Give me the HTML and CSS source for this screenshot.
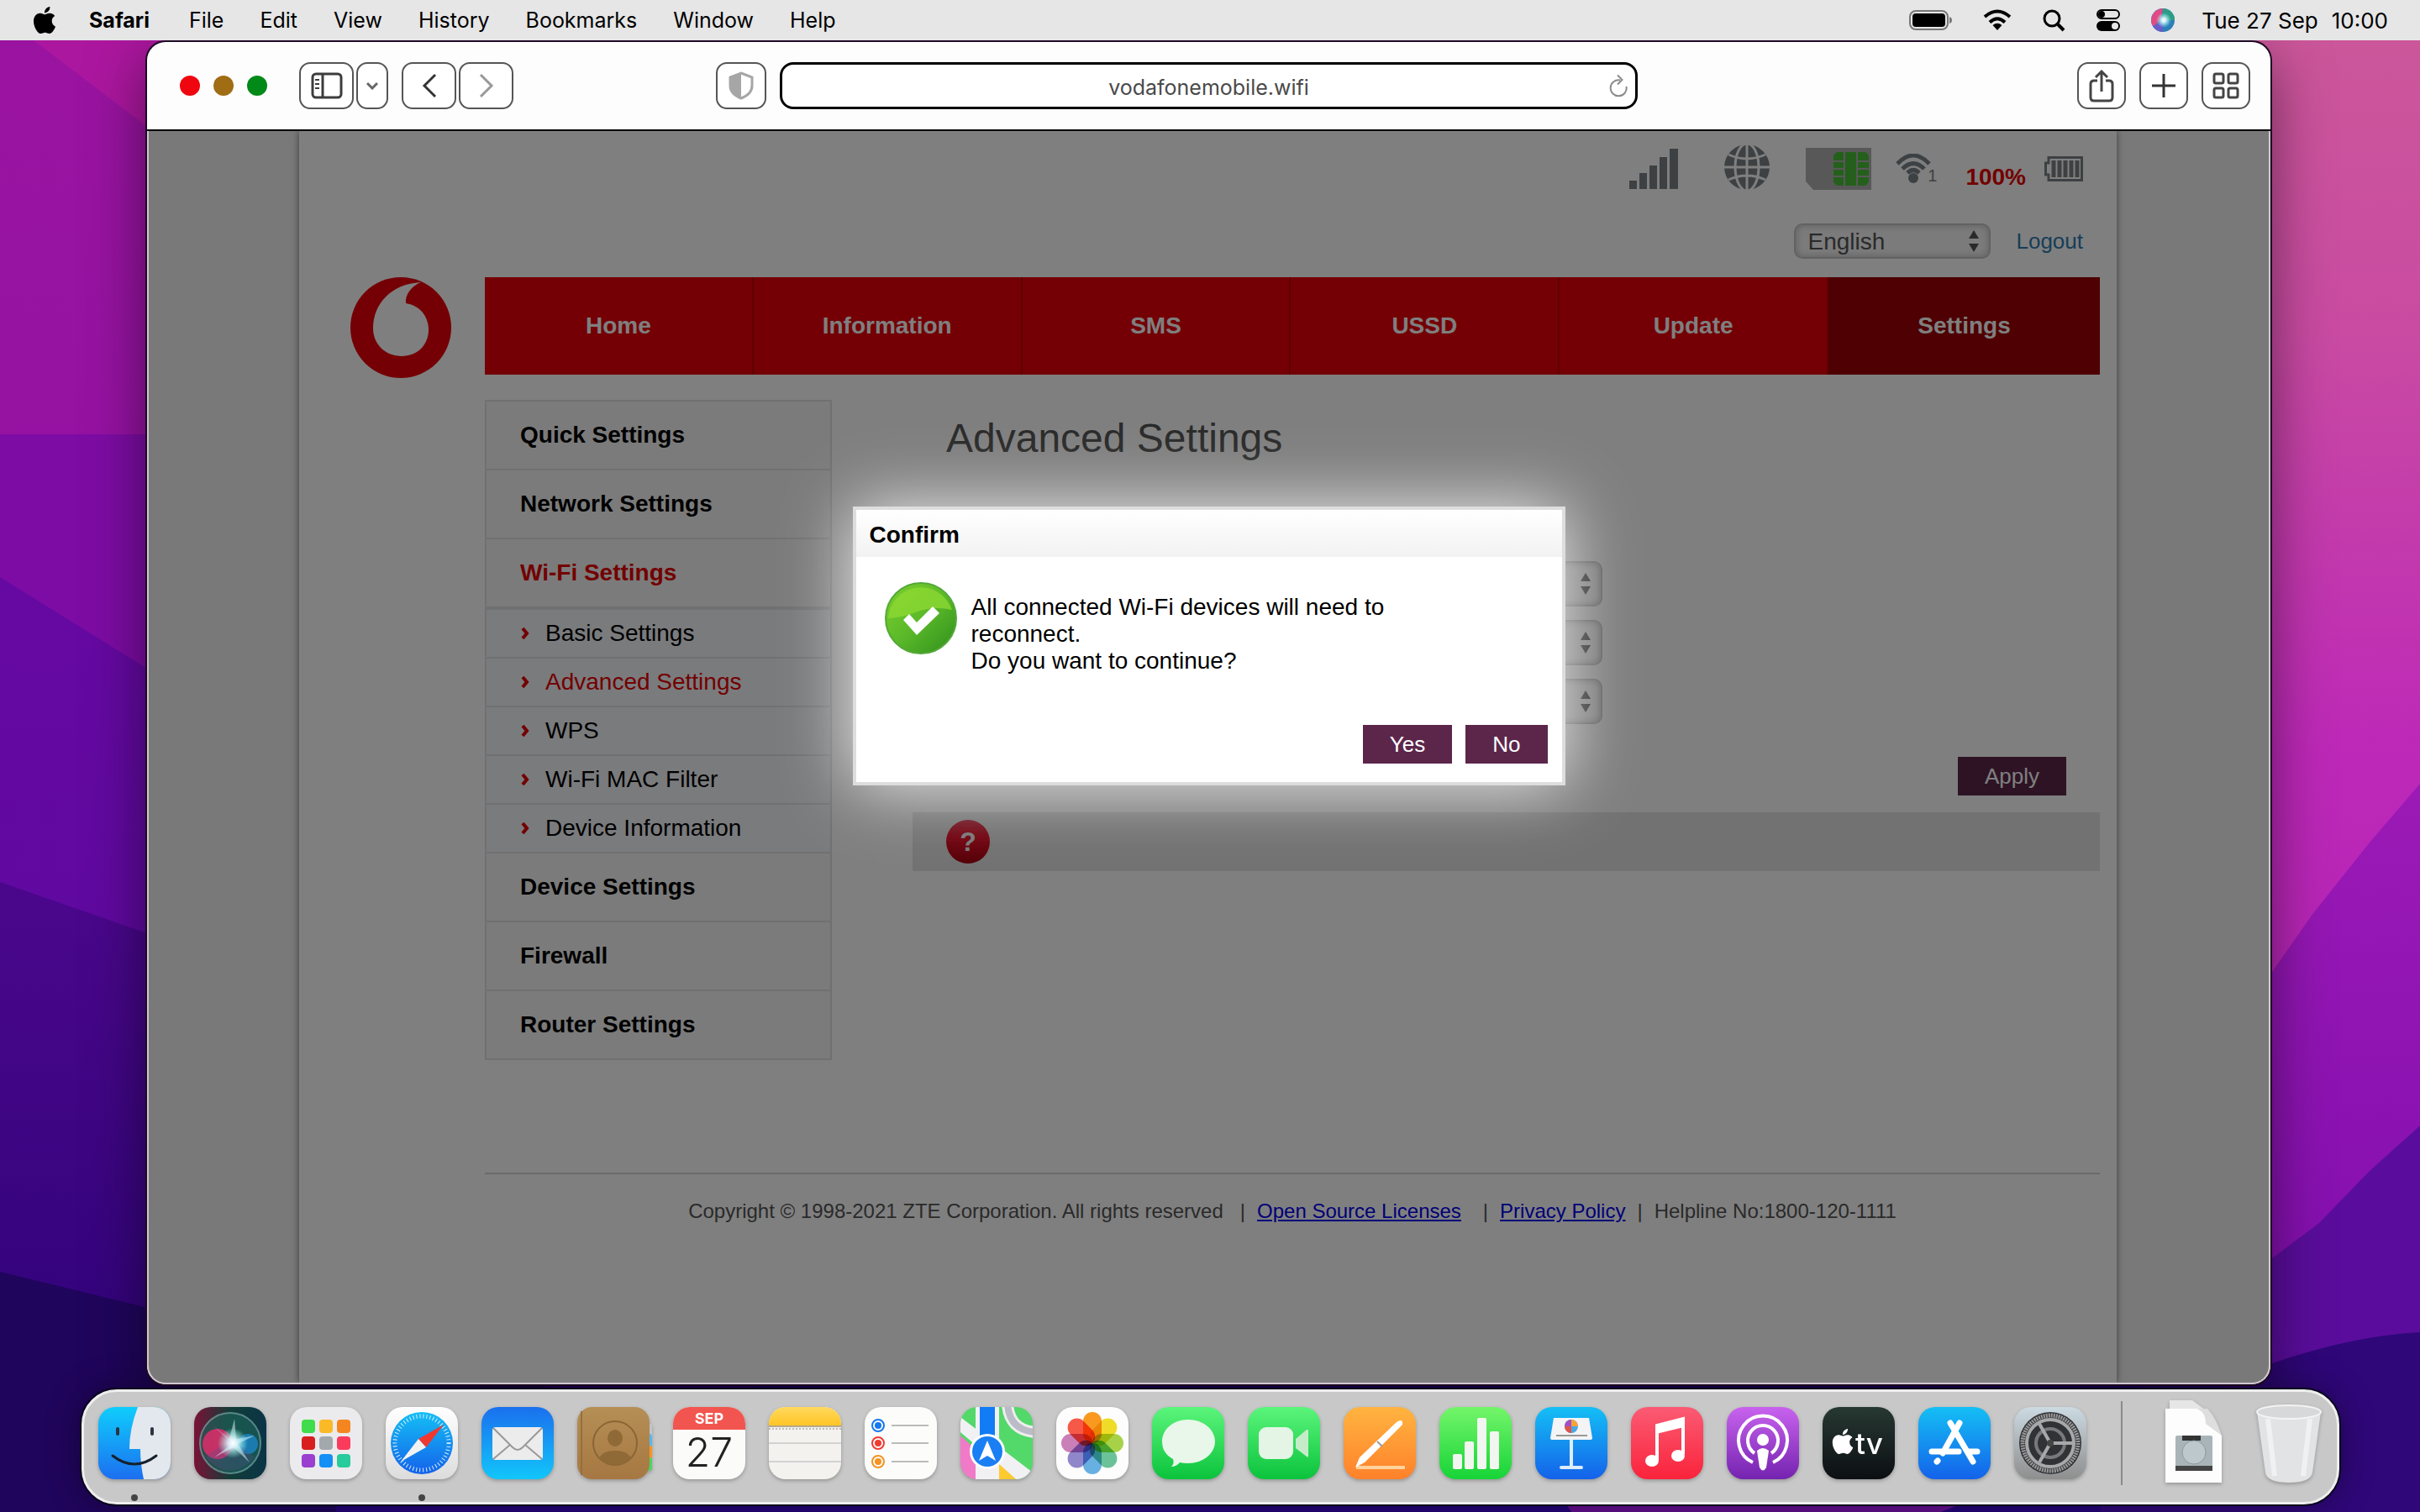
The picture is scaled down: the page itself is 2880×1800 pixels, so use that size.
FILE: index.html
```html
<!DOCTYPE html>
<html lang="en">
<head>
    <meta charset="UTF-8">
    <meta name="viewport" content="width=device-width, initial-scale=1.0">
    <title>Advanced Settings</title>
    <link rel="stylesheet" href="styles.css">
</head>
<body>
    <!-- Wallpaper -->
    <svg class="wallpaper" viewBox="0 0 2880 1800" preserveAspectRatio="none" aria-hidden="true">
        <defs>
            <linearGradient id="wpA" x1="0" y1="0" x2="0" y2="1"><stop offset="0" stop-color="#9a14a0"/><stop offset="1" stop-color="#8a0da6"/></linearGradient>
            <linearGradient id="wpB" x1="0" y1="0" x2="0" y2="1"><stop offset="0" stop-color="#cc5899"/><stop offset=".22" stop-color="#c94ba2"/><stop offset=".5" stop-color="#bd28b8"/><stop offset="1" stop-color="#a81fb0"/></linearGradient>
            <linearGradient id="wpC" x1="0" y1="0" x2="0" y2="1"><stop offset="0" stop-color="#6609a2"/><stop offset="1" stop-color="#55089c"/></linearGradient>
            <linearGradient id="wpD" x1="0" y1="0" x2="0" y2="1"><stop offset="0" stop-color="#4b078c"/><stop offset="1" stop-color="#290275"/></linearGradient>
            <linearGradient id="wpE" x1="0" y1="0" x2="0" y2="1"><stop offset="0" stop-color="#9c1ab6"/><stop offset="1" stop-color="#780aac"/></linearGradient>
        </defs>
        <rect width="2880" height="1800" fill="url(#wpB)"/>
        <path d="M0 0H1400V1800H0z" fill="#ac179f"/>
        <path d="M0 0 40 48 174 150 900 900V1800H0z" fill="url(#wpA)"/>
        <path d="M0 517H600V1800H0z" fill="#7d0ca4"/>
        <path d="M0 687 172 794 900 1200V1800H0z" fill="url(#wpC)"/>
        <path d="M0 1050 172 1110 900 1300V1800H0z" fill="url(#wpD)"/>
        <path d="M0 1514 172 1556 1400 1800H0z" fill="#20055c"/>
        <path d="M2200 1800 2704 1157 2753 1087 2820 1003 2880 933V1800z" fill="url(#wpE)"/>
        <path d="M1400 1740 2704 1498 2760 1456 2820 1394 2880 1340V1800H1400z" fill="#5a0d9c"/>
        <path d="M400 1790 900 1650H3000V1800H400z" fill="#25047a"/>
        <path d="M1862 1788H2340L2310 1800H1870z" fill="#640f90"/>
        <path d="M2500 1660 2704 1623Q2800 1590 2880 1586V1800H2500z" fill="#2f0779"/>
    </svg>

    <!-- Shared shapes -->
    <svg class="sprite" aria-hidden="true">
        <defs>
            <symbol id="apple" viewBox="0 0 24 24"><path fill="currentColor" d="M12.152 6.896c-.948 0-2.415-1.078-3.96-1.04-2.04.027-3.91 1.183-4.961 3.014-2.117 3.675-.546 9.103 1.519 12.09 1.013 1.454 2.208 3.09 3.792 3.039 1.52-.065 2.09-.987 3.935-.987 1.831 0 2.35.987 3.96.948 1.637-.026 2.676-1.48 3.676-2.948 1.156-1.688 1.636-3.325 1.662-3.415-.039-.013-3.182-1.221-3.22-4.857-.026-3.04 2.48-4.494 2.597-4.559-1.429-2.09-3.623-2.324-4.39-2.376-2-.156-3.675 1.09-4.61 1.09zM15.53 3.83c.843-1.012 1.4-2.427 1.245-3.83-1.207.052-2.662.805-3.532 1.818-.78.896-1.454 2.338-1.273 3.714 1.338.104 2.715-.688 3.559-1.701"/></symbol>
            <symbol id="updown" viewBox="0 0 14 28"><path fill="currentColor" d="M7 1 13 11H1zM7 27 1 17H13z"/></symbol>
            <symbol id="arrow" viewBox="0 0 12 18"><path d="M3 3 8 9 3 15" fill="none" stroke="#e60000" stroke-width="4"/></symbol>
            <clipPath id="tile"><rect width="86" height="86" rx="20"/></clipPath>
            <linearGradient id="gFinder" x1="0" y1="0" x2="0" y2="1"><stop offset="0" stop-color="#0fcdfc"/><stop offset="1" stop-color="#1c6ff0"/></linearGradient>
            <linearGradient id="gBlue" x1="0" y1="0" x2="0" y2="1"><stop offset="0" stop-color="#1a70ee"/><stop offset="1" stop-color="#12c6fa"/></linearGradient>
            <linearGradient id="gSky" x1="0" y1="0" x2="0" y2="1"><stop offset="0" stop-color="#14bff5"/><stop offset="1" stop-color="#1462ea"/></linearGradient>
            <linearGradient id="gGreen" x1="0" y1="0" x2="0" y2="1"><stop offset="0" stop-color="#5bf57b"/><stop offset="1" stop-color="#0bc33c"/></linearGradient>
            <linearGradient id="gLime" x1="0" y1="0" x2="0" y2="1"><stop offset="0" stop-color="#74f56a"/><stop offset="1" stop-color="#16d437"/></linearGradient>
            <linearGradient id="gOrange" x1="0" y1="0" x2="0" y2="1"><stop offset="0" stop-color="#ffb440"/><stop offset="1" stop-color="#ff812b"/></linearGradient>
            <linearGradient id="gRed" x1="0" y1="0" x2="0" y2="1"><stop offset="0" stop-color="#fb5b74"/><stop offset="1" stop-color="#fa233b"/></linearGradient>
            <linearGradient id="gPurple" x1="0" y1="0" x2="0" y2="1"><stop offset="0" stop-color="#c863ee"/><stop offset="1" stop-color="#7423b0"/></linearGradient>
            <linearGradient id="gPaper" x1="0" y1="0" x2="0" y2="1"><stop offset="0" stop-color="#fff"/><stop offset="1" stop-color="#dcdcdc"/></linearGradient>
            <linearGradient id="gDark" x1="0" y1="0" x2="0" y2="1"><stop offset="0" stop-color="#273832"/><stop offset="1" stop-color="#0c0f12"/></linearGradient>
            <linearGradient id="gBrown" x1="0" y1="0" x2="0" y2="1"><stop offset="0" stop-color="#b58f55"/><stop offset="1" stop-color="#a67742"/></linearGradient>
            <linearGradient id="gGold" x1="0" y1="0" x2="0" y2="1"><stop offset="0" stop-color="#ffd95e"/><stop offset="1" stop-color="#ffc525"/></linearGradient>
            <linearGradient id="gSteel" x1="0" y1="0" x2="0" y2="1"><stop offset="0" stop-color="#ccdae2"/><stop offset="1" stop-color="#8e8e8e"/></linearGradient>
            <linearGradient id="gOk" x1="0" y1="0" x2="1" y2="1"><stop offset="0" stop-color="#7cd02c"/><stop offset=".5" stop-color="#5bb929"/><stop offset="1" stop-color="#2e8f1c"/></linearGradient>
            <linearGradient id="gSiri" x1="0" y1="0" x2="1" y2="0"><stop offset="0" stop-color="#7a1236"/><stop offset=".5" stop-color="#123c38"/><stop offset="1" stop-color="#0a3446"/></linearGradient>
            <radialGradient id="gGlow"><stop offset="0" stop-color="#fff"/><stop offset=".3" stop-color="#dff8ff" stop-opacity=".9"/><stop offset="1" stop-color="#8fe" stop-opacity="0"/></radialGradient>
        </defs>
    </svg>

    <header class="menubar">
        <nav class="menus">
            <svg class="apple-icon" aria-hidden="true"><use href="#apple"/></svg>
            <a href="#" class="app-name">Safari</a>
            <a href="#">File</a>
            <a href="#">Edit</a>
            <a href="#">View</a>
            <a href="#">History</a>
            <a href="#">Bookmarks</a>
            <a href="#">Window</a>
            <a href="#">Help</a>
        </nav>
        <div class="menu-extras">
            <svg width="52" height="24" viewBox="0 0 52 24"><rect x="1" y="1" width="45" height="22" rx="7" fill="none" stroke="#777" stroke-width="2"/><rect x="4" y="4" width="39" height="16" rx="4"/><path d="M48 8q3 1 3 4t-3 4z" fill="#777"/></svg>
            <svg width="34" height="26" viewBox="0 0 34 26" fill="none" stroke="#000" stroke-width="4"><path d="M2 9Q17-4 32 9M8 15.500Q17 7 26 15.500"/><path d="M17 25 11.500 19Q17 14.500 22.500 19z" fill="#000" stroke="none"/></svg>
            <svg width="28" height="28" viewBox="0 0 28 28" fill="none" stroke="#000" stroke-width="3"><circle cx="12" cy="12" r="9"/><path d="M18.500 18.500 26 26" stroke-width="4"/></svg>
            <svg width="30" height="28" viewBox="0 0 30 28"><rect x="2" y="2" width="26" height="10" rx="5" fill="none" stroke="#000" stroke-width="2"/><circle cx="7" cy="7" r="4"/><rect x="1" y="15" width="28" height="12" rx="6"/><circle cx="23" cy="21" r="4" fill="#e6e6e6"/></svg>
            <svg width="28" height="28" viewBox="0 0 28 28"><circle cx="14" cy="14" r="14" fill="#2c7fb8"/><path d="M14 0A14 14 0 0 0 2 21Q12 18 14 0z" fill="#e04b86"/><path d="M14 0A14 14 0 0 1 28 14H14z" fill="#2d9c86"/><path d="M2 21A14 14 0 0 0 14 28V16z" fill="#6a5bc8"/><circle cx="15" cy="14" r="9" fill="url(#gGlow)"/></svg>
            <time class="clock"><span>Tue 27 Sep</span><span>10:00</span></time>
        </div>
    </header>

    <main class="window">
        <div class="toolbar">
            <div class="tools tools-left">
                <div class="lights"><i class="close"></i><i class="min"></i><i class="max"></i></div>
                <button type="button" class="tool tool-wide" aria-label="Sidebar">
                    <svg width="38" height="32" viewBox="0 0 38 32" fill="none" stroke="#3c3c3c" stroke-width="3"><rect x="2" y="2" width="34" height="28" rx="4"/><path d="M14 2V30"/><path d="M5 9H10M5 14H10M5 19H10" stroke-width="2"/></svg>
                </button>
                <button type="button" class="tool tool-narrow" aria-label="Tab groups">
                    <svg width="14" height="10" viewBox="0 0 14 10" fill="none" stroke="#666" stroke-width="3"><path d="M1 2 7 8 13 2"/></svg>
                </button>
                <button type="button" class="tool tool-wide tool-back" aria-label="Back">
                    <svg width="18" height="30" viewBox="0 0 18 30" fill="none" stroke="#333" stroke-width="3"><path d="M16 2 3 15 16 28"/></svg>
                </button>
                <button type="button" class="tool tool-wide" aria-label="Forward">
                    <svg width="18" height="30" viewBox="0 0 18 30" fill="none" stroke="#999" stroke-width="3"><path d="M2 2 15 15 2 28"/></svg>
                </button>
                <button type="button" class="tool tool-shield" aria-label="Privacy report">
                    <svg width="30" height="34" viewBox="0 0 30 34"><path d="M15 2 28 7V17Q28 27 15 32 2 27 2 17V7z" fill="none" stroke="#a6a6a6" stroke-width="3"/><path d="M15 2V32Q2 27 2 17V7z" fill="#a6a6a6"/></svg>
                </button>
            </div>
            <div class="address">
                <input type="text" aria-label="Address" value="vodafonemobile.wifi">
                <button type="button" aria-label="Reload">
                    <svg width="22" height="28" viewBox="0 0 22 28" fill="none" stroke="#8a8a8a" stroke-width="2"><path d="M13 7.500A9.500 9.500 0 1 0 20.500 15"/><path d="M10 1.500 15.500 7 10 12.500"/></svg>
                </button>
            </div>
            <div class="tools tools-right">
                <button type="button" class="tool" aria-label="Share">
                    <svg width="30" height="40" viewBox="0 0 30 40" fill="none" stroke="#444" stroke-width="3"><path d="M10 14H6Q2 14 2 18V34Q2 38 6 38H24Q28 38 28 34V18Q28 14 24 14H20M15 27V4M8 10 15 3 22 10"/></svg>
                </button>
                <button type="button" class="tool" aria-label="New tab">
                    <svg width="28" height="28" viewBox="0 0 28 28" stroke="#333" stroke-width="3"><path d="M14 0V28M0 14H28"/></svg>
                </button>
                <button type="button" class="tool" aria-label="Tab overview">
                    <svg width="32" height="32" viewBox="0 0 32 32" fill="none" stroke="#444" stroke-width="3"><rect x="2" y="2" width="11" height="11" rx="2"/><rect x="19" y="2" width="11" height="11" rx="2"/><rect x="2" y="19" width="11" height="11" rx="2"/><rect x="19" y="19" width="11" height="11" rx="2"/></svg>
                </button>
            </div>
        </div>

        <div class="viewport">
            <div class="page">
                <div class="status">
                    <svg width="58" height="48" viewBox="0 0 58 48" fill="#7c8286"><rect y="38" width="9" height="10"/><rect x="12" y="29" width="9" height="19"/><rect x="24" y="20" width="9" height="28"/><rect x="36" y="10" width="9" height="38"/><rect x="48" width="10" height="48"/></svg>
                    <svg class="globe" width="54" height="54" viewBox="0 0 54 54"><circle cx="27" cy="27" r="27" fill="#7c8286"/><g fill="none" stroke="#fff" stroke-width="3"><path d="M27 0V54M0 27H54M5 12Q27 22 49 12M5 42Q27 32 49 42"/><ellipse cx="27" cy="27" rx="14" ry="28"/></g></svg>
                    <svg class="sim" width="78" height="50" viewBox="0 0 78 50"><path d="M0 0H78V50H9L0 40z" fill="#b0b0b0"/><rect x="33" y="5" width="42" height="40" rx="6" fill="#48c038"/><path d="M46 5V45M61 5V45M33 16H46M33 25H46M33 34H46M61 16H75M61 25H75M61 34H75" stroke="#b0b0b0" stroke-width="2"/></svg>
                    <div class="wifi">
                        <svg width="42" height="36" viewBox="0 0 42 36"><g fill="none" stroke="#7c8286" stroke-width="5"><path d="M2 12Q21-8 40 12M8 18Q21 5 34 18M14 23Q21 16 28 23"/></g><circle cx="21" cy="29" r="6" fill="#7c8286"/></svg>
                        <span>1</span>
                    </div>
                    <strong>100%</strong>
                    <svg width="46" height="30" viewBox="0 0 46 30"><path d="M5 1.500H44.500V28.500H5V22H1.500V8H5z" fill="none" stroke="#7c8286" stroke-width="3"/><path d="M11 5V25M18 5V25M25 5V25M32 5V25M39 5V25" stroke="#7c8286" stroke-width="5"/></svg>
                </div>
                <div class="account">
                    <span class="select language">
                        <select aria-label="Language"><option>English</option></select>
                        <svg><use href="#updown"/></svg>
                    </span>
                    <a href="#">Logout</a>
                </div>

                <div class="banner">
                    <svg class="logo" width="120" height="120" viewBox="0 0 120 120"><circle cx="60" cy="60" r="60" fill="#e8000a"/><path d="M84 6C48 8 27 32 27 61 27 80 42 94 61 94 80 94 93 80 93 63 93 46 83 34 66 31 65 21 72 11 84 6z" fill="#fff"/></svg>
                    <nav class="tabs">
                        <a href="#">Home</a>
                        <a href="#">Information</a>
                        <a href="#">SMS</a>
                        <a href="#">USSD</a>
                        <a href="#">Update</a>
                        <a href="#" class="active">Settings</a>
                    </nav>
                </div>

                <div class="columns">
                    <nav class="sidebar">
                        <a href="#">Quick Settings</a>
                        <a href="#">Network Settings</a>
                        <a href="#" class="current">Wi-Fi Settings</a>
                        <div class="submenu">
                            <a href="#"><svg><use href="#arrow"/></svg>Basic Settings</a>
                            <a href="#" class="current"><svg><use href="#arrow"/></svg>Advanced Settings</a>
                            <a href="#"><svg><use href="#arrow"/></svg>WPS</a>
                            <a href="#"><svg><use href="#arrow"/></svg>Wi-Fi MAC Filter</a>
                            <a href="#"><svg><use href="#arrow"/></svg>Device Information</a>
                        </div>
                        <a href="#">Device Settings</a>
                        <a href="#">Firewall</a>
                        <a href="#">Router Settings</a>
                    </nav>
                    <section class="content">
                        <h1>Advanced Settings</h1>
                        <form>
                            <span class="select"><select aria-label="Network mode"><option></option></select><svg><use href="#updown"/></svg></span>
                            <span class="select"><select aria-label="Country"><option></option></select><svg><use href="#updown"/></svg></span>
                            <span class="select"><select aria-label="Channel"><option></option></select><svg><use href="#updown"/></svg></span>
                            <button type="button" class="btn apply">Apply</button>
                        </form>
                        <div class="help"><button type="button">?</button></div>
                    </section>
                </div>

                <footer>
                    <span class="copyright">Copyright © 1998-2021 ZTE Corporation. All rights reserved</span>
                    <span>|</span>
                    <a href="#">Open Source Licenses</a>
                    <span class="bar">|</span>
                    <a href="#">Privacy Policy</a>
                    <span>|</span>
                    <span>Helpline No:1800-120-1111</span>
                </footer>
            </div>

            <!-- Confirm dialog -->
            <div class="overlay"></div>
            <div class="dialog" role="dialog" aria-labelledby="dialogTitle">
                <h2 id="dialogTitle">Confirm</h2>
                <div class="dialog-body">
                    <svg width="86" height="86" viewBox="0 0 86 86"><circle cx="43" cy="43" r="42" fill="url(#gOk)" stroke="#55a83a" stroke-width="2"/><path d="M4 43A39 39 0 0 1 80 33Q58 28 36 36 22 42 4 43z" fill="#8cd832" opacity=".8"/><path d="M22 45 29 38 38 48 57 29 65 37 38 63z" fill="#fff"/></svg>
                    <p>All connected Wi-Fi devices will need to reconnect.<br>Do you want to continue?</p>
                </div>
                <div class="dialog-buttons">
                    <button type="button" class="btn">Yes</button>
                    <button type="button" class="btn">No</button>
                </div>
            </div>
        </div>
    </main>

    <ul class="dock">
        <li class="running"><svg viewBox="0 0 86 86"><g clip-path="url(#tile)"><rect width="86" height="86" fill="url(#gFinder)"/><path d="M47 0Q37 26 37 50H50Q50 68 54 86H86V0z" fill="#e3e8ef"/></g><path d="M23 26V32M64 26V32" stroke="#2b3440" stroke-width="4" stroke-linecap="round"/><path d="M17 58Q43 78 69 58" fill="none" stroke="#16202c" stroke-width="3" stroke-linecap="round"/></svg></li>
        <li><svg viewBox="0 0 86 86"><rect width="86" height="86" rx="20" fill="url(#gSiri)"/><circle cx="43" cy="43" r="36" fill="#1c5f57" opacity=".7" stroke="#7aa" stroke-width="2"/><circle cx="28" cy="44" r="18" fill="#e02d6b" opacity=".85"/><circle cx="64" cy="44" r="12" fill="#1d86c8" opacity=".8"/><path d="M14 60Q43 30 72 60 43 92 14 60z" fill="#5b4f90" opacity=".3"/><path d="M46 43 22 22 42 38 48 14 50 38 72 34 52 44 66 66 47 48 24 60z" fill="#e8fbff" opacity=".5"/><circle cx="46" cy="43" r="18" fill="url(#gGlow)"/></svg></li>
        <li><svg viewBox="0 0 86 86"><rect width="86" height="86" rx="20" fill="#ebebed"/><rect x="14" y="15" width="16" height="16" rx="4" fill="#3fdc4c"/><rect x="35" y="15" width="16" height="16" rx="4" fill="#fbb927"/><rect x="56" y="15" width="16" height="16" rx="4" fill="#f5861f"/><rect x="14" y="35" width="16" height="16" rx="4" fill="#d81e1e"/><rect x="35" y="35" width="16" height="16" rx="4" fill="#a3a8ac"/><rect x="56" y="35" width="16" height="16" rx="4" fill="#fb3b5c"/><rect x="14" y="56" width="16" height="16" rx="4" fill="#9a3fd0"/><rect x="35" y="56" width="16" height="16" rx="4" fill="#148ff5"/><rect x="56" y="56" width="16" height="16" rx="4" fill="#27cb9c"/></svg></li>
        <li class="running"><svg viewBox="0 0 86 86"><rect width="86" height="86" rx="20" fill="url(#gPaper)"/><circle cx="43" cy="43" r="37" fill="url(#gSky)"/><circle cx="43" cy="43" r="32" fill="none" stroke="#d9efff" stroke-width="5" stroke-dasharray="1 3"/><path d="M69 21 39 38 48 48z" fill="#f0382f"/><path d="M18 65 39 38 48 48z" fill="#f2f2f2"/></svg></li>
        <li><svg viewBox="0 0 86 86"><rect width="86" height="86" rx="20" fill="url(#gBlue)"/><rect x="13" y="24" width="60" height="39" rx="4" fill="#ececec"/><path d="M14 25 37 48Q43 54 49 48L72 25M14 62 34 45M72 62 52 45" fill="none" stroke="#999" stroke-width="2"/></svg></li>
        <li><svg viewBox="0 0 86 86"><rect x="72" y="20" width="17" height="18" rx="3" fill="#bfc4c8"/><rect x="72" y="32" width="17" height="16" rx="3" fill="#58b8ec"/><rect x="72" y="46" width="17" height="16" rx="3" fill="#ff9320"/><rect x="72" y="60" width="17" height="16" rx="3" fill="#4cd463"/><rect width="86" height="86" rx="18" fill="url(#gBrown)"/><path d="M5 5V81" stroke="#94703c" stroke-width="2"/><circle cx="45" cy="43" r="26" fill="none" stroke="#8a6534" stroke-width="2"/><ellipse cx="45" cy="37" rx="9" ry="10" fill="#8f6936"/><path d="M26 61Q30 52 45 52T64 61Q56 69 45 69T26 61z" fill="#8f6936"/></svg></li>
        <li><svg viewBox="0 0 86 86"><g clip-path="url(#tile)"><rect width="86" height="86" fill="#fbfbfa"/><rect width="86" height="27" fill="#f2554f"/></g><text x="43" y="20" class="cal-month">SEP</text><text x="43" y="71" class="cal-day">27</text></svg></li>
        <li><svg viewBox="0 0 86 86"><g clip-path="url(#tile)"><rect width="86" height="86" fill="#f4f2ef"/><rect width="86" height="22" fill="url(#gGold)"/><path d="M0 23H86" stroke="#b5a88c" stroke-width="2"/><path d="M0 26H86" stroke="#bbb" stroke-width="2" stroke-dasharray="2 2"/><path d="M0 43H86M0 65H86" stroke="#d2d2d2" stroke-width="2"/></g></svg></li>
        <li><svg viewBox="0 0 86 86"><rect width="86" height="86" rx="20" fill="#fcfcfb"/><path d="M32 22H76M32 43H76M32 65H76" stroke="#bbb" stroke-width="2"/><g stroke-width="2"><circle cx="16" cy="22" r="7" fill="none" stroke="#1478ee"/><circle cx="16" cy="22" r="4" fill="#1478ee"/><circle cx="16" cy="43" r="7" fill="none" stroke="#f03a32"/><circle cx="16" cy="43" r="4" fill="#f03a32"/><circle cx="16" cy="65" r="7" fill="none" stroke="#f39322"/><circle cx="16" cy="65" r="4" fill="#f39322"/></g></svg></li>
        <li><svg viewBox="0 0 86 86"><g clip-path="url(#tile)"><rect width="86" height="86" fill="#53d86a"/><path d="M0 34 20 52V86H0z" fill="#f07ac8"/><path d="M0 12 86 78V86H66L0 30z" fill="#f1f1f4"/><path d="M44 66 66 86H44z" fill="#fdcb30"/><rect x="18" width="28" height="86" fill="#f1f1f4"/><rect x="23" width="18" height="50" fill="#117cf5"/><path d="M56-4Q58 28 90 30" fill="none" stroke="#eee" stroke-width="14"/><path d="M56-4Q58 28 90 30" fill="none" stroke="#bcbcc8" stroke-width="8"/></g><circle cx="32" cy="53" r="21" fill="#fff"/><circle cx="32" cy="53" r="18" fill="#1a7ff2"/><path d="M32 40 42 64 32 58 22 64z" fill="#fff"/></svg></li>
        <li><svg viewBox="0 0 86 86"><rect width="86" height="86" rx="20" fill="#fdfdfd"/><g class="petals"><rect x="32" y="6" width="22" height="37" rx="11" fill="#fb9a20"/><rect x="32" y="6" width="22" height="37" rx="11" fill="#f0de28" transform="rotate(45 43 43)"/><rect x="32" y="6" width="22" height="37" rx="11" fill="#a8d448" transform="rotate(90 43 43)"/><rect x="32" y="6" width="22" height="37" rx="11" fill="#6cc49a" transform="rotate(135 43 43)"/><rect x="32" y="6" width="22" height="37" rx="11" fill="#6ab2e4" transform="rotate(180 43 43)"/><rect x="32" y="6" width="22" height="37" rx="11" fill="#9088cc" transform="rotate(225 43 43)"/><rect x="32" y="6" width="22" height="37" rx="11" fill="#cc80ba" transform="rotate(270 43 43)"/><rect x="32" y="6" width="22" height="37" rx="11" fill="#f85a48" transform="rotate(315 43 43)"/></g></svg></li>
        <li><svg viewBox="0 0 86 86"><rect width="86" height="86" rx="20" fill="url(#gGreen)"/><path d="M43 15C61 15 75 27 75 41S61 67 43 67Q37 67 33 66 29 71 23 71 27 67 25 62 12 55 12 41C12 27 25 15 43 15z" fill="#e9f7ea"/></svg></li>
        <li><svg viewBox="0 0 86 86"><rect width="86" height="86" rx="20" fill="url(#gGreen)"/><rect x="13" y="24" width="41" height="38" rx="9" fill="#e4f5e6"/><path d="M57 38 70 27Q72 26 72 29V58Q72 61 70 59L57 49z" fill="#c4ecc9"/></svg></li>
        <li><svg viewBox="0 0 86 86"><rect width="86" height="86" rx="20" fill="url(#gOrange)"/><path d="M15 72H73" stroke="#ffd29c" stroke-width="4"/><path d="M14 72 19 60 63 18Q71 13 70 21L25 66z" fill="#fff"/><path d="M40 41 46 47" stroke="#999" stroke-width="2"/></svg></li>
        <li><svg viewBox="0 0 86 86"><rect width="86" height="86" rx="20" fill="url(#gLime)"/><g fill="#f1f6f0"><rect x="16" y="56" width="11" height="18" rx="2"/><rect x="30" y="41" width="11" height="33" rx="2"/><rect x="45" y="13" width="11" height="61" rx="2"/><rect x="60" y="29" width="11" height="45" rx="2"/></g></svg></li>
        <li><svg viewBox="0 0 86 86"><rect width="86" height="86" rx="20" fill="url(#gSky)"/><path d="M22 13H64L68 37Q68 39 65 39H21Q18 39 18 37z" fill="#f4f4f6"/><path d="M25 34H62" stroke="#999" stroke-width="2"/><circle cx="43" cy="23" r="8" fill="#4aa8e0"/><path d="M43 23V15A8 8 0 0 0 35 23z" fill="#a050c0"/><path d="M43 23V15A8 8 0 0 1 51 23z" fill="#f8a23a"/><path d="M43 23H35A8 8 0 0 0 43 31z" fill="#e0524a"/><path d="M43 39V72" stroke="#dcecfa" stroke-width="4"/><rect x="29" y="70" width="28" height="4" rx="2" fill="#dcecfa"/></svg></li>
        <li><svg viewBox="0 0 86 86"><rect width="86" height="86" rx="20" fill="url(#gRed)"/><path d="M31 63V22L62 14V56" fill="none" stroke="#fff" stroke-width="4"/><path d="M30 21 63 14V24L30 32z" fill="#fff"/><ellipse cx="25" cy="64" rx="8" ry="7" fill="#fff"/><ellipse cx="56" cy="58" rx="8" ry="7" fill="#fff"/></svg></li>
        <li><svg viewBox="0 0 86 86"><rect width="86" height="86" rx="20" fill="url(#gPurple)"/><g fill="none" stroke="#fff" stroke-width="4"><path d="M31 66A29 29 0 1 1 55 66M33 55A18 18 0 1 1 53 55"/></g><circle cx="43" cy="39" r="7" fill="#fff"/><path d="M36 52Q43 46 50 52L47 72Q43 79 39 72z" fill="#fff"/></svg></li>
        <li class="tv"><svg viewBox="0 0 86 86"><rect width="86" height="86" rx="20" fill="url(#gDark)"/><use href="#apple" x="9" y="26" width="30" height="30"/><text x="39" y="56">tv</text></svg></li>
        <li><svg viewBox="0 0 86 86"><rect width="86" height="86" rx="20" fill="url(#gSky)"/><g stroke="#fff" stroke-width="7" stroke-linecap="round"><path d="M49 19 29 55M38 19 65 65M16 53H48M60 53H70M23 64 22 65"/></g></svg></li>
        <li><svg viewBox="0 0 86 86"><rect width="86" height="86" rx="20" fill="url(#gSteel)"/><circle cx="43" cy="43" r="37" fill="#303236"/><g fill="none"><circle cx="43" cy="43" r="33" stroke="#999" stroke-width="5" stroke-dasharray="2 1"/><circle cx="43" cy="43" r="28" stroke="#a6a8aa" stroke-width="4"/><circle cx="43" cy="43" r="17" stroke="#77797c" stroke-width="4"/><path d="M43 43H70M43 43 30 20M43 43 30 66" stroke="#a6a8aa" stroke-width="4"/></g><circle cx="43" cy="43" r="4" fill="#444"/></svg></li>
        <li class="divider"></li>
        <li><svg viewBox="0 0 86 86"><path d="M15-8H42L58 4V80H15z" fill="#e6e6e6"/><path d="M10 2H48L60 10 77 34V90H10z" fill="#fdfdfd"/><path d="M48 2Q58 6 58 20L77 34Q70 12 60 2z" fill="#dedede"/><rect x="22" y="34" width="44" height="42" rx="2" fill="#a8b4b8"/><rect x="30" y="34" width="22" height="6" fill="#333"/><circle cx="44" cy="54" r="14" fill="#bcc8cc" stroke="#8d999d"/><rect x="22" y="70" width="44" height="6" fill="#444"/></svg></li>
        <li><svg viewBox="0 0 86 86"><path d="M5 6 15 78Q17 90 43 90T71 78L81 6z" fill="#e2e3e5"/><path d="M18 14 26 82M68 14 60 82" stroke="#f1f1f2" stroke-width="6"/><ellipse cx="43" cy="6" rx="38" ry="8" fill="#d7d8da" stroke="#f3f3f3" stroke-width="2"/></svg></li>
    </ul>
</body>
</html>
```
FILE: styles.css
```css
* {
    box-sizing: border-box;
}

body {
    margin: 0;
    min-height: 100vh;
    display: flex;
    flex-direction: column;
    font-family: "Liberation Sans", Arial, sans-serif;
    font-size: 28px;
    color: #000;
    background-color: #4a0a8c;
    overflow: hidden;
}

button, input, select {
    font-family: inherit;
    font-size: inherit;
}

svg {
    display: block;
    flex-shrink: 0;
}

.wallpaper {
    position: absolute;
    left: 0;
    top: 0;
    width: 100%;
    height: 100%;
    z-index: -1;
}

.sprite {
    position: absolute;
    width: 0;
    height: 0;
}

/* Menu bar */
.menubar {
    position: relative;
    z-index: 1;
    display: flex;
    justify-content: space-between;
    align-items: center;
    height: 48px;
    padding: 0 38px 0 36px;
    background-color: #e6e6e6;
    font-family: Inter, "Liberation Sans", sans-serif;
    font-size: 25px;
}

.menus, .menu-extras {
    display: flex;
    align-items: center;
}

.menus {
    gap: 43px;
}

.menus a {
    color: #000;
    text-decoration: none;
}

.menus .app-name {
    font-weight: bold;
    margin: 0 4px 0 -7px;
}

.apple-icon {
    width: 34px;
    height: 32px;
}

.menu-extras {
    gap: 36px;
}

.menu-extras .clock {
    display: flex;
    gap: 16px;
    margin-left: -4px;
    font-size: 26px;
}

/* Browser window */
.window {
    flex: 1;
    display: flex;
    flex-direction: column;
    margin: 2px 178px 6px 175px;
    border-radius: 22px;
    background-color: #fdfdfd;
    overflow: hidden;
    box-shadow: 0 0 0 2px #1e0a24, 0 20px 70px rgba(0, 0, 0, 0.5);
}

.toolbar {
    display: grid;
    grid-template-columns: 1fr minmax(400px, 1021px) 1fr;
    gap: 16px;
    align-items: center;
    height: 106px;
    padding: 0 24px;
    border-bottom: 2px solid #000;
    font-family: Inter, "Liberation Sans", sans-serif;
}

.tools {
    display: flex;
    align-items: center;
}

.tools-left {
    gap: 3px;
}

.tools-right {
    gap: 16px;
    justify-content: flex-end;
}

.lights {
    display: flex;
    gap: 16px;
    margin: 0 35px 0 15px;
}

.lights i {
    width: 24px;
    height: 24px;
    border-radius: 50%;
}

.close { background-color: #f0060f; }
.min { background-color: #a06c14; }
.max { background-color: #028a18; }

.tool {
    display: flex;
    align-items: center;
    justify-content: center;
    width: 58px;
    height: 56px;
    padding: 0;
    border: 2px solid #555;
    border-radius: 13px;
    background-color: #fff;
}

.tool-wide { width: 65px; }
.tool-narrow { width: 38px; }
.tool-back { margin-left: 13px; }

.tool-shield {
    width: 60px;
    margin-left: auto;
}

.address {
    display: grid;
    align-items: center;
}

.address input, .address button {
    grid-area: 1 / 1;
}

.address input {
    height: 56px;
    width: 100%;
    padding-top: 4px;
    border: 3px solid #000;
    border-radius: 16px;
    background-color: #fff;
    color: #4a4a4a;
    text-align: center;
    font-size: 25px;
}

.address button {
    justify-self: end;
    margin-right: 12px;
    padding: 0;
    border: 0;
    background: none;
}

/* Router page */
.viewport {
    position: relative;
    flex: 1;
    display: flex;
    padding: 0 181px 0 179px;
    background-color: #f2f2f2;
    border: 2px solid #d0c8d0;
    border-top: 0;
    border-radius: 0 0 22px 22px;
    overflow: hidden;
}

.page {
    flex: 1;
    padding: 16px 20px 0 61px;
    background-color: #fff;
    box-shadow: 0 0 8px rgba(0, 0, 0, 0.5);
}

.status {
    display: flex;
    justify-content: flex-end;
    align-items: center;
    height: 58px;
    padding-right: 20px;
}

.status .globe { margin: 0 43px 4px 55px; }

.status .wifi {
    display: flex;
    align-items: flex-end;
    margin: 0 34px 0 29px;
    color: #7c8286;
    font-size: 20px;
    line-height: 20px;
}

.status .wifi span {
    margin-left: -4px;
}

.status strong {
    margin-right: 22px;
    padding-top: 20px;
    color: #e60000;
}

.account {
    display: flex;
    justify-content: flex-end;
    align-items: center;
    gap: 30px;
    height: 42px;
    margin-top: 36px;
    padding-right: 20px;
}

.account a {
    color: #2f7db0;
    font-size: 26px;
    text-decoration: none;
}

.select {
    display: grid;
    align-items: center;
    color: #555;
}

.select select, .select svg {
    grid-area: 1 / 1;
}

.select select {
    appearance: none;
    width: 100%;
    height: 54px;
    padding: 0 14px;
    border: 2px solid #c4c4c4;
    border-radius: 10px;
    background-color: #f6f6f6;
    box-shadow: inset 0 0 8px rgba(0, 0, 0, 0.25);
    color: #555;
}

.select svg {
    justify-self: end;
    width: 14px;
    height: 28px;
    margin-right: 13px;
}

.language {
    width: 234px;
}

.language select {
    height: 42px;
}

.banner {
    display: flex;
    gap: 40px;
    height: 116px;
    margin-top: 22px;
}

.tabs {
    flex: 1;
    display: flex;
    background-color: #e8000a;
}

.tabs a {
    flex: 1;
    display: flex;
    align-items: center;
    justify-content: center;
    border-right: 2px solid #c00000;
    color: #fff;
    font-weight: bold;
    text-decoration: none;
}

.tabs .active {
    flex: 0 0 323px;
    background-color: #9c0004;
    border-right: 0;
}

.columns {
    display: flex;
    align-items: flex-start;
    gap: 96px;
    margin: 30px 0 0 160px;
}

.sidebar {
    width: 413px;
    border: 2px solid #e0e0e0;
    background-color: #f6f6f6;
}

.sidebar a {
    display: flex;
    align-items: center;
    height: 82px;
    padding-left: 40px;
    border-bottom: 2px solid #e0e0e0;
    color: #000;
    font-weight: bold;
    text-decoration: none;
}

.sidebar > a:last-child {
    height: 80px;
    border-bottom: 0;
}

.submenu {
    border-top: 2px solid #e0e0e0;
    background-color: #f4f6fa;
}

.submenu a {
    gap: 18px;
    height: 58px;
    font-weight: normal;
}

.submenu svg {
    width: 12px;
    height: 18px;
}

.sidebar .current {
    color: #e60000;
}

.content {
    flex: 1;
}

h1 {
    margin: 16px 0 116px 40px;
    font-size: 48px;
    line-height: 60px;
    font-weight: normal;
    color: #555;
}

form {
    display: flex;
    flex-direction: column;
    gap: 16px;
}

form .select {
    width: 508px;
    margin-left: 313px;
}

.btn {
    height: 46px;
    padding: 0 32px;
    border: 0;
    background-color: #5c264b;
    color: #fff;
    font-size: 26px;
}

.apply {
    align-self: flex-end;
    margin: 23px 40px 20px 0;
}

.help {
    display: flex;
    align-items: center;
    height: 70px;
    padding-left: 40px;
    background-color: #e4e4e4;
}

.help button {
    width: 52px;
    height: 52px;
    padding: 0;
    border: 0;
    border-radius: 50%;
    background-image: linear-gradient(#d8203a, #e4001c 40%, #a80010);
    color: #eee;
    font-size: 32px;
    font-weight: bold;
}

footer {
    display: flex;
    justify-content: center;
    gap: 14px;
    margin: 134px 0 0 160px;
    padding-top: 29px;
    border-top: 2px solid #d4d4d4;
    color: #555;
    font-size: 24px;
    line-height: 30px;
}

footer a {
    color: #0000ee;
}

footer .copyright {
    margin-right: 6px;
}

footer .bar {
    margin-left: 12px;
}

/* Confirm dialog */
.overlay {
    position: absolute;
    left: 0;
    top: 0;
    width: 100%;
    height: 100%;
    background: rgba(0, 0, 0, 0.5);
}

.dialog {
    position: absolute;
    left: 50%;
    top: 447px;
    transform: translateX(-50%);
    width: 848px;
    border: 4px solid #ddd;
    background-color: #fff;
    box-shadow: 0 0 76px rgba(255, 255, 255, 0.85);
}

.dialog h2 {
    margin: 0;
    padding: 4px 16px 0;
    font-size: 28px;
    line-height: 52px;
    background-image: linear-gradient(#fff, #f2f2f2);
}

.dialog-body {
    display: flex;
    gap: 17px;
    padding: 30px 34px 0;
}

.dialog-body p {
    width: 540px;
    margin: 14px 0 0;
    line-height: 32px;
}

.dialog-buttons {
    display: flex;
    justify-content: flex-end;
    gap: 16px;
    padding: 60px 17px 22px;
}

/* Dock */
.dock {
    display: flex;
    align-items: center;
    align-self: center;
    gap: 28px;
    height: 137px;
    margin: 0 0 9px;
    padding: 0 14px 10px 17px;
    list-style: none;
    border: 3px solid #eee;
    border-radius: 42px;
    background-color: #c8c8c8;
    box-shadow: 0 0 0 2px #08031c, 0 0 40px rgba(0, 0, 0, 0.4);
}

.dock li {
    position: relative;
}

.dock svg {
    width: 86px;
    height: 86px;
    overflow: visible;
    filter: drop-shadow(0 2px 2px rgba(0, 0, 0, 0.25));
}

.dock .running::after {
    content: "";
    position: absolute;
    left: 50%;
    bottom: -26px;
    width: 8px;
    height: 8px;
    margin-left: -4px;
    border-radius: 50%;
    background-color: #444;
}

.dock .divider {
    width: 2px;
    height: 100px;
    margin: 0 13px;
    background-color: #8a8a8a;
}

.petals rect {
    mix-blend-mode: multiply;
}

.dock text {
    font-family: Inter, "Liberation Sans", sans-serif;
}

.dock .cal-month {
    font-size: 18px;
    font-weight: bold;
    fill: #fff;
    text-anchor: middle;
}

.dock .cal-day {
    font-size: 48px;
    font-weight: 300;
    fill: #222;
    text-anchor: middle;
}

.tv {
    color: #fff;
}

.tv text {
    font-size: 35px;
    font-weight: 500;
    fill: #fff;
}
```
